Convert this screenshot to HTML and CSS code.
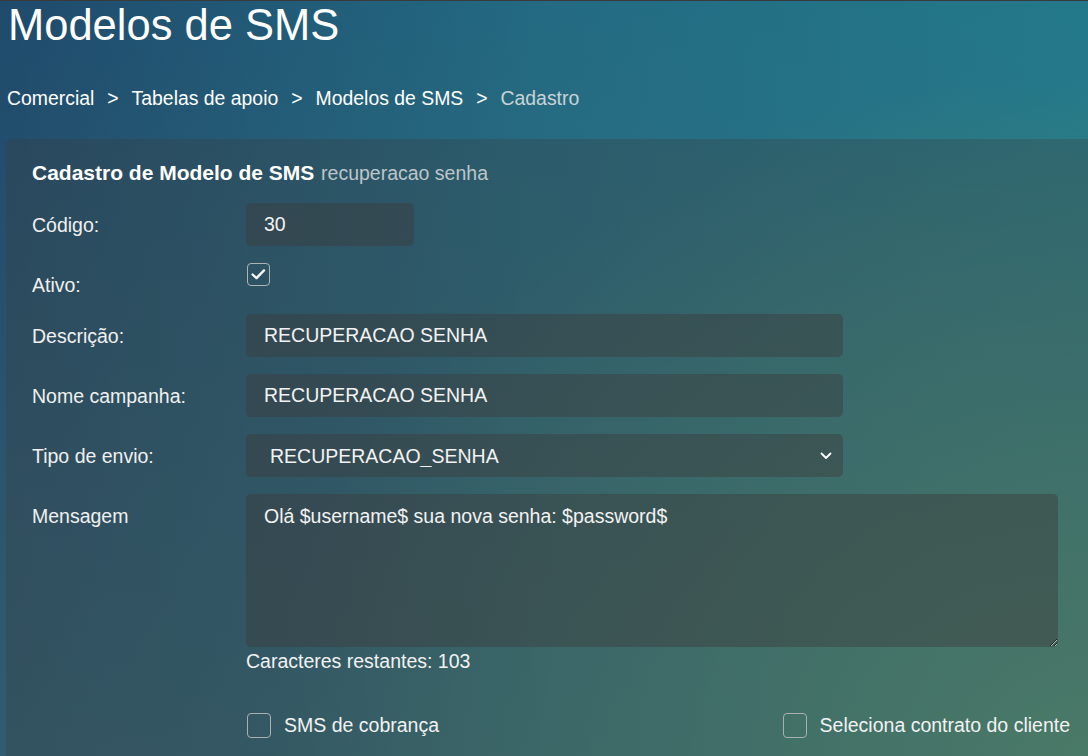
FILE: index.html
```html
<!DOCTYPE html>
<html lang="pt-BR">
<head>
<meta charset="utf-8">
<title>Modelos de SMS</title>
<link rel="stylesheet" href="styles.css">
</head>
<body>
<div class="page">
  <h1 class="title">Modelos de SMS</h1>
  <nav class="crumbs"><span class="crumb">Comercial</span><span class="sep">&gt;</span><span class="crumb">Tabelas de apoio</span><span class="sep">&gt;</span><span class="crumb">Modelos de SMS</span><span class="sep">&gt;</span><span class="crumb current">Cadastro</span></nav>
  <section class="card">
    <h2 class="card-head"><strong>Cadastro de Modelo de SMS</strong> <span class="sub">recuperacao senha</span></h2>
    <form class="form">
      <label class="lbl">Código:</label>
      <div class="field"><input class="input w-code" type="text" value="30"></div>

      <label class="lbl">Ativo:</label>
      <div class="field">
        <span class="check checked">
          <svg viewBox="0 0 23 23" width="21" height="21"><path d="M5 11.5 L9.3 15.5 L17.5 7" fill="none" stroke="#fff" stroke-width="2.5" stroke-linecap="round" stroke-linejoin="round"/></svg>
        </span>
      </div>

      <label class="lbl">Descrição:</label>
      <div class="field"><input class="input w-mid" type="text" value="RECUPERACAO SENHA"></div>

      <label class="lbl">Nome campanha:</label>
      <div class="field"><input class="input w-mid" type="text" value="RECUPERACAO SENHA"></div>

      <label class="lbl">Tipo de envio:</label>
      <div class="field">
        <div class="select-wrap">
          <select class="input select w-mid"><option>RECUPERACAO_SENHA</option></select>
          <svg class="chev" viewBox="0 0 12 8" width="12" height="8"><path d="M1.5 1.5 L6 6 L10.5 1.5" fill="none" stroke="#fff" stroke-width="1.8" stroke-linecap="round" stroke-linejoin="round"/></svg>
        </div>
      </div>

      <label class="lbl">Mensagem</label>
      <div class="field">
        <textarea class="input area">Olá $username$ sua nova senha: $password$</textarea>
        <div class="counter">Caracteres restantes: 103</div>
      </div>

      <div class="opts">
        <label class="opt"><span class="check"></span>SMS de cobrança</label>
        <label class="opt"><span class="check"></span>Seleciona contrato do cliente</label>
      </div>
    </form>
  </section>
</div>
</body>
</html>
```

FILE: styles.css
```css
html, body {
  margin: 0;
  height: 100%;
}
body {
  font-family: "Liberation Sans", Arial, sans-serif;
  color: #f2f2f2;
  border-top: 1px solid #3a3a3a;
  box-sizing: border-box;
  overflow: hidden;
  background:
    radial-gradient(ellipse 75% 90% at 100% 100%, rgba(82, 150, 122, 0.95) 0%, rgba(82, 150, 122, 0) 100%),
    linear-gradient(to bottom, rgba(70, 115, 115, 0) 0%, rgba(70, 115, 115, 0.45) 100%),
    linear-gradient(to right, #1f4a6c 0%, #236a82 50%, #23798a 100%);
}
.page {
  padding-left: 6px;
  display: flex;
  flex-direction: column;
  min-height: 100%;
}
.title {
  margin: 0 0 38px 2px;
  font-size: 43.5px;
  line-height: 48px;
  font-weight: normal;
  color: #fff;
}
.crumbs {
  font-size: 19.4px;
  line-height: 22px;
  margin-left: 1px;
  margin-bottom: 30px;
  color: #fff;
}
.sep {
  padding: 0 13px 0 13px;
}
.crumb.current {
  color: #c9d3d6;
}
.card {
  flex: 1;
  background: rgba(60, 60, 60, 0.3);
  border-radius: 6px 0 0 0;
  padding: 21px 18px 0 26px;
}
.card-head {
  margin: 0 0 18px 0;
  line-height: 24px;
  font-weight: normal;
}
.card-head strong {
  font-size: 21px;
  font-weight: bold;
  color: #fff;
}
.card-head .sub {
  font-size: 19.5px;
  color: #bcc6ca;
}
.form {
  display: grid;
  grid-template-columns: 214px 1fr;
  row-gap: 17px;
  font-size: 19.5px;
}
.lbl {
  padding: 11px 0 1px 0;
  line-height: 22px;
  color: #f0f0f0;
}
.field {
  display: flex;
  flex-direction: column;
  align-items: flex-start;
}
.input {
  font-family: "Liberation Sans", Arial, sans-serif;
  font-size: 19.5px;
  color: #f2f2f2;
  background: rgba(60, 60, 60, 0.45);
  border: none;
  border-radius: 5px;
  height: 43px;
  padding: 0 18px;
  box-sizing: border-box;
  outline: none;
}
.w-code { width: 168px; }
.w-mid { width: 597px; }
.select-wrap {
  position: relative;
}
.select {
  appearance: none;
  -webkit-appearance: none;
  padding-left: 24px;
  display: block;
}
.chev {
  position: absolute;
  right: 11px;
  top: 18px;
  pointer-events: none;
}
.area {
  width: 812px;
  height: 153px;
  padding: 11px 18px;
  line-height: 22px;
  resize: both;
  display: block;
}
.counter {
  margin-top: 3px;
  line-height: 22px;
}
.check {
  display: inline-flex;
  align-items: center;
  justify-content: center;
  width: 24px;
  height: 25px;
  border: 1px solid #a9b0b2;
  border-radius: 4px;
  box-sizing: border-box;
  flex: none;
}
.check.checked {
  width: 23px;
  height: 23px;
  margin-left: 1px;
  border: 1.5px solid #aeb4b6;
}
.opts {
  grid-column: 2;
  display: flex;
  justify-content: space-between;
  margin-top: 24px;
}
.opt {
  display: flex;
  align-items: center;
  gap: 13px;
  line-height: 25px;
  padding-left: 1px;
}
```
